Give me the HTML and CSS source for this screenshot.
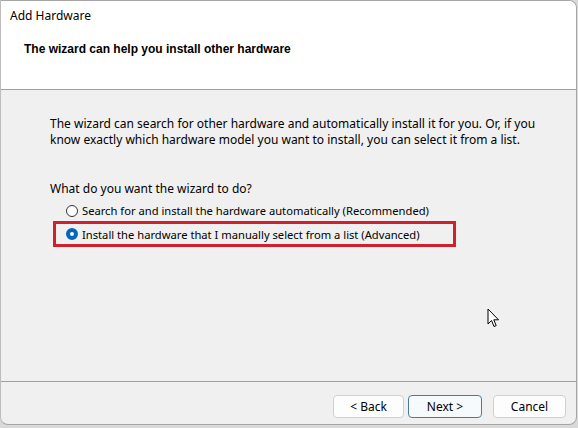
FILE: index.html
```html
<!DOCTYPE html>
<html lang="en">

<head>
  <meta charset="UTF-8">
  <title>Add Hardware</title>
  <link rel="stylesheet" href="styles.css">
</head>

<body>

  <div class="window">
    <div class="header">
      <div class="title">Add Hardware</div>
      <h1>The wizard can help you install other hardware</h1>
    </div>

    <div class="content">
      <p class="intro">The wizard can search for other hardware and automatically install it for you. Or, if you know exactly which hardware model you want to install, you can select it from a list.</p>

      <p class="question">What do you want the wizard to do?</p>

      <label class="option">
        <span class="radio"></span>
        Search for and install the hardware automatically (Recommended)
      </label>
      <label class="option selected">
        <span class="radio"></span>
        Install the hardware that I manually select from a list (Advanced)
      </label>
    </div>

    <div class="footer">
      <button class="btn">&lt; Back</button>
      <button class="btn primary">Next &gt;</button>
      <button class="btn cancel">Cancel</button>
    </div>

    <svg class="cursor" width="13" height="21" viewBox="0 0 13 21">
      <path d="M1 1 L1 16 L4.5 12.5 L7 18.5 L9.2 17.6 L6.8 11.8 L11.5 11.8 Z" fill="#fff" stroke="#000" stroke-width="1" stroke-linejoin="round"/>
    </svg>
  </div>

</body>
</html>
```

FILE: styles.css
```css
body { margin: 0; background: #d9d9d9; font-family: "Noto Sans", "Open Sans", sans-serif; font-size: 12px; color: #000; overflow: hidden; }
.window { position: relative; width: 577px; height: 425px; background: #f0f0f0; border: 1px solid #a6a6a6; border-left-color: #bdbdbd; border-radius: 0 8px 8px 8px; display: flex; flex-direction: column; box-sizing: border-box; overflow: hidden; }
.header { height: 89px; background: #fff; border-bottom: 1px solid #a0a0a0; box-sizing: border-box; flex-shrink: 0; }
.title { padding: 7px 0 0 9px; line-height: 16px; }
h1 { margin: 17px 0 0 23px; font-family: "Liberation Sans", Arial, sans-serif; font-size: 12px; font-weight: bold; line-height: 16px; }
.content { flex: 1; padding: 26px 20px 0 49px; }
.intro { margin: 0; line-height: 16px; }
.question { margin: 33px 0 3px 0; line-height: 16px; }
.option { display: flex; align-items: center; gap: 4px; height: 21px; margin-left: 16px; font-size: 11.2px; }
.radio { width: 10px; height: 10px; border: 1px solid #333; border-radius: 50%; background: #fff; flex-shrink: 0; }
.option.selected { margin-left: 3px; padding-left: 10px; width: 387px; height: 20px; border: 3px solid #d0202e; }
.option.selected .radio { width: 4px; height: 4px; border: 4px solid #0067c0; background: #fff; }
.footer { height: 43px; box-sizing: border-box; border-top: 1px solid #a0a0a0; display: flex; justify-content: flex-end; align-items: flex-start; padding: 13px 10px 0 0; gap: 4px; flex-shrink: 0; }
.btn { width: 71px; height: 23px; font-family: "Noto Sans", "Open Sans", sans-serif; font-size: 12px; background: #fdfdfd; border: 1px solid #d0d0d0; border-radius: 4px; color: #000; padding: 0; }
.btn.primary { width: 74px; border-color: #4d7a9c; background: #f7fafc; }
.btn.cancel { width: 73px; margin-left: 7px; }
.cursor { position: absolute; left: 486px; top: 307px; }
```
